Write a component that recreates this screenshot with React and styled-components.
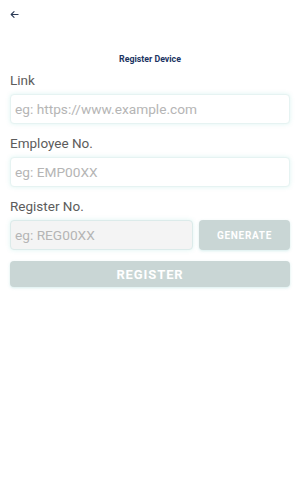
import React from "react";
import styled, { createGlobalStyle } from "styled-components";

const Global = createGlobalStyle`
  html, body { margin: 0; padding: 0; background: #ffffff; }
  body { font-family: Roboto, "Noto Sans", "Liberation Sans", sans-serif; }
  * { box-sizing: border-box; }
`;

const Page = styled.div`
  width: 300px;
  min-height: 480px;
  background: #fff;
  display: flex;
  flex-direction: column;
`;

const TopBar = styled.div`
  height: 28px;
  display: flex;
  align-items: center;
  padding-left: 9px;
`;

const BackButton = styled.button`
  border: none;
  background: none;
  padding: 0;
  width: 10px;
  height: 10px;
  display: flex;
  align-items: center;
  justify-content: center;
  color: #2b3a55;
`;

const Title = styled.h1`
  margin: 25px 0 0 0;
  text-align: center;
  font-size: 8.8px;
  line-height: 12px;
  font-weight: 700;
  color: #1b3462;
`;

const Form = styled.div`
  display: flex;
  flex-direction: column;
  padding: 0 10px;
  margin-top: 7px;
`;

const Field = styled.div`
  display: flex;
  flex-direction: column;
  gap: 6px;
  margin-bottom: 11px;
`;

const Label = styled.label`
  font-size: 13.5px;
  line-height: 16px;
  color: #5c5c5c;
`;

const Row = styled.div`
  display: flex;
  gap: 6px;
`;

const Input = styled.input`
  flex: 1;
  min-width: 0;
  height: 30px;
  border: 1px solid ${(p) => (p.$disabled ? "#dcebea" : "#e6f3f2")};
  border-radius: 4px;
  background: ${(p) => (p.$disabled ? "#f4f4f4" : "#ffffff")};
  box-shadow: 0 0 4px rgba(120, 210, 205, 0.25);
  padding: 0 4px;
  font-family: inherit;
  font-size: 13.7px;
  color: #333;
  outline: none;
  &::placeholder { color: #b5b5b5; }
`;

const ActionButton = styled.button`
  height: ${(p) => p.$h}px;
  width: ${(p) => (p.$w ? p.$w + "px" : "100%")};
  flex-shrink: 0;
  border: none;
  border-radius: 4px;
  background: #c9d6d5;
  color: #ffffff;
  font-family: inherit;
  font-weight: 700;
  font-size: ${(p) => p.$fs}px;
  letter-spacing: ${(p) => p.$ls}px;
  box-shadow: 0 1px 3px rgba(120, 200, 195, 0.3);
  text-transform: uppercase;
`;

const ArrowIcon = () => (
  <svg width="9" height="9" viewBox="0 0 10 10" fill="none">
    <path d="M9 5H1.5M4.5 1.8L1.3 5l3.2 3.2" stroke="currentColor" strokeWidth="1.2" strokeLinecap="round" strokeLinejoin="round" />
  </svg>
);

export default function App() {
  return (
    <>
      <Global />
      <Page>
        <TopBar>
          <BackButton aria-label="back"><ArrowIcon /></BackButton>
        </TopBar>
        <Title>Register Device</Title>
        <Form>
          <Field>
            <Label>Link</Label>
            <Row><Input placeholder="eg: https://www.example.com" /></Row>
          </Field>
          <Field>
            <Label>Employee No.</Label>
            <Row><Input placeholder="eg: EMP00XX" /></Row>
          </Field>
          <Field>
            <Label>Register No.</Label>
            <Row>
              <Input $disabled placeholder="eg: REG00XX" disabled />
              <ActionButton $h={30} $w={91} $fs={10} $ls={0.7}>Generate</ActionButton>
            </Row>
          </Field>
          <ActionButton $h={26} $fs={13} $ls={0.9}>Register</ActionButton>
        </Form>
      </Page>
    </>
  );
}
